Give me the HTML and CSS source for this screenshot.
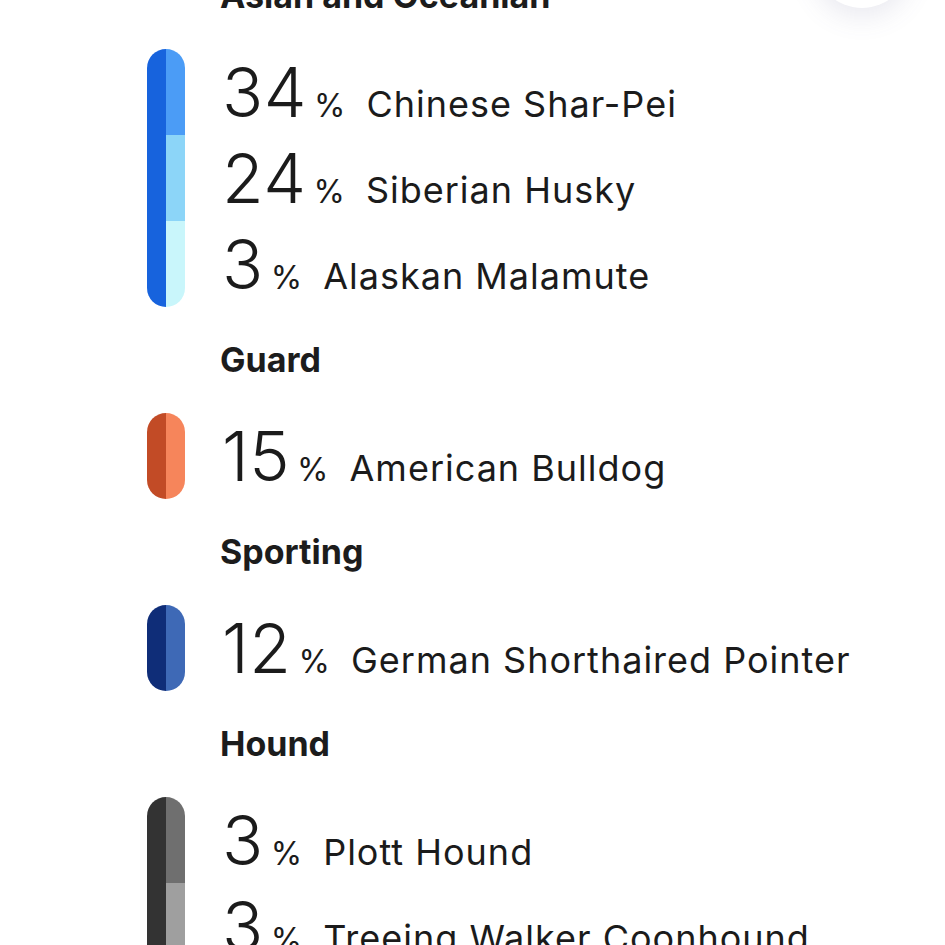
FILE: index.html
```html
<!DOCTYPE html>
<html lang="en">
<head>
<meta charset="utf-8">
<title>Breed breakdown</title>
<link rel="stylesheet" href="styles.css">
</head>
<body>
<div class="screen">
  <div class="fab" aria-hidden="true"></div>
  <div class="breakdown">
    <h2 class="group-title">Asian and Oceanian</h2>
    <div class="group">
      <div class="bar">
        <div class="bar-base blue-base"></div>
        <div class="bar-segs">
          <div class="seg blue-1"></div>
          <div class="seg blue-2"></div>
          <div class="seg blue-3"></div>
        </div>
      </div>
      <div class="rows">
        <div class="row"><span class="pct">34</span><span class="sign">%</span><span class="name">Chinese Shar-Pei</span></div>
        <div class="row"><span class="pct">24</span><span class="sign">%</span><span class="name">Siberian Husky</span></div>
        <div class="row"><span class="pct">3</span><span class="sign">%</span><span class="name">Alaskan Malamute</span></div>
      </div>
    </div>

    <h2 class="group-title">Guard</h2>
    <div class="group">
      <div class="bar">
        <div class="bar-base orange-base"></div>
        <div class="bar-segs">
          <div class="seg orange-1"></div>
        </div>
      </div>
      <div class="rows">
        <div class="row"><span class="pct">15</span><span class="sign">%</span><span class="name">American Bulldog</span></div>
      </div>
    </div>

    <h2 class="group-title">Sporting</h2>
    <div class="group">
      <div class="bar">
        <div class="bar-base navy-base"></div>
        <div class="bar-segs">
          <div class="seg navy-1"></div>
        </div>
      </div>
      <div class="rows">
        <div class="row"><span class="pct">12</span><span class="sign">%</span><span class="name">German Shorthaired Pointer</span></div>
      </div>
    </div>

    <h2 class="group-title">Hound</h2>
    <div class="group">
      <div class="bar">
        <div class="bar-base gray-base"></div>
        <div class="bar-segs">
          <div class="seg gray-1"></div>
          <div class="seg gray-2"></div>
        </div>
      </div>
      <div class="rows">
        <div class="row"><span class="pct">3</span><span class="sign">%</span><span class="name">Plott Hound</span></div>
        <div class="row"><span class="pct">3</span><span class="sign">%</span><span class="name">Treeing Walker Coonhound</span></div>
      </div>
    </div>
  </div>
</div>
</body>
</html>
```

FILE: styles.css
```css
html, body {
  margin: 0;
  padding: 0;
  background: #ffffff;
  overflow: hidden;
}

body {
  font-family: Inter, "Noto Sans", "Liberation Sans", sans-serif;
  color: #1b1b1b;
}

.screen {
  position: relative;
  width: 945px;
  height: 945px;
  overflow: hidden;
}

.fab {
  position: absolute;
  top: -88px;
  left: 814px;
  width: 96px;
  height: 96px;
  border-radius: 50%;
  background: #ffffff;
  box-shadow: 0 8px 28px rgba(90, 90, 140, 0.14);
}

.breakdown {
  display: flex;
  flex-direction: column;
  gap: 33px;
  padding-left: 147px;
  margin-top: -24px;
}

.group-title {
  margin: 0 0 0 73px;
  font-size: 34px;
  line-height: 40px;
  font-weight: 700;
  color: #1c1c1c;
}

.group {
  display: flex;
  gap: 35px;
}

.bar {
  display: flex;
  width: 38px;
  flex: none;
  border-radius: 19px;
  overflow: hidden;
}

.bar-base {
  width: 19px;
}

.bar-segs {
  display: flex;
  flex-direction: column;
  width: 19px;
}

.seg {
  height: 86px;
}

.blue-base { background: #1763dd; }
.blue-1 { background: #4b9cf6; }
.blue-2 { background: #8cd5f8; }
.blue-3 { background: #c9f6fb; }

.orange-base { background: #c24b26; }
.orange-1 { background: #f6855b; }

.navy-base { background: #0f2d78; }
.navy-1 { background: #3e69b6; }

.gray-base { background: #333333; }
.gray-1 { background: #6f6f6f; }
.gray-2 { background: #9f9f9f; }

.rows {
  display: flex;
  flex-direction: column;
}

.row {
  display: flex;
  align-items: baseline;
  height: 86px;
  line-height: 86px;
  white-space: nowrap;
}

.pct {
  font-size: 68px;
  font-weight: 300;
  letter-spacing: 0.5px;
  margin-left: 2px;
}

.sign {
  font-size: 32px;
  margin-left: 7px;
}

.name {
  font-size: 36px;
  letter-spacing: 1px;
  margin-left: 21px;
}
```
